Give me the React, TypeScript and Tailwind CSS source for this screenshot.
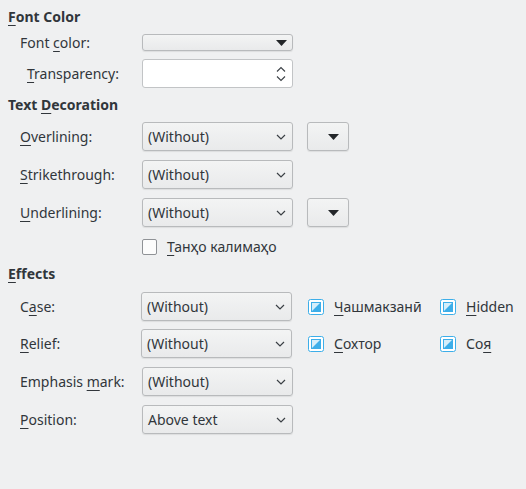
import { FC, ReactNode } from "react";

const U: FC<{ children: ReactNode }> = ({ children }) => (
	<span className="underline underline-offset-[3px] decoration-1">{children}</span>
);

const Chevron = () => (
	<svg width="10" height="6" viewBox="0 0 10 6" className="shrink-0">
		<path d="M1 1 L5 5 L9 1" fill="none" stroke="#3b4045" strokeWidth="1.2" />
	</svg>
);

const Triangle = () => (
	<svg width="11" height="6" viewBox="0 0 11 6">
		<path d="M0 0 H11 L5.5 6 Z" fill="#232629" />
	</svg>
);

const Combo: FC<{ value: string }> = ({ value }) => (
	<div className="w-[151px] h-[29px] flex items-center justify-between pl-[5px] pr-[6px] rounded-[3px] border border-[#b8babc] bg-gradient-to-b from-[#f3f4f4] to-[#e9eaeb] shadow-[0_1px_1px_rgba(0,0,0,0.08)]">
		<span>{value}</span>
		<Chevron />
	</div>
);

const ColorBtn = () => (
	<div className="ml-[14px] w-[42px] h-[29px] flex items-center justify-center pl-[10px] rounded-[3px] border border-[#b8babc] bg-gradient-to-b from-[#f3f4f4] to-[#e9eaeb] shadow-[0_1px_1px_rgba(0,0,0,0.08)]">
		<Triangle />
	</div>
);

const TriCheck = () => (
	<svg width="16" height="16" viewBox="0 0 16 16" className="shrink-0">
		<rect x="0.5" y="0.5" width="15" height="15" rx="2" fill="#ffffff" stroke="#3daee9" />
		<rect x="3.5" y="3.5" width="9" height="9" fill="#d6eefa" stroke="#3daee9" />
		<path d="M12 4 L12 12 L4 12 Z" fill="#3daee9" />
	</svg>
);

const Row: FC<{ label: ReactNode; className?: string; children: ReactNode }> = ({ label, className, children }) => (
	<div className={`flex items-center ${className ?? ""}`}>
		<div className="w-[134px] pl-[12px]">{label}</div>
		{children}
	</div>
);

const Effect: FC<{ label: ReactNode; w: string }> = ({ label, w }) => (
	<div className={`flex items-center gap-[10px] ${w}`}>
		<TriCheck />
		<span>{label}</span>
	</div>
);

export default function App() {
	return (
		<div
			className="w-[526px] h-[489px] bg-[#eff0f1] text-[#31363b] text-[14px] pl-[8px] pt-[7px] flex flex-col"
			style={{ fontFamily: '"Noto Sans", "Open Sans", sans-serif' }}
		>
			<div className="h-[20px] leading-[20px] font-bold">
				<U>F</U>ont Color
			</div>
			<Row className="mt-[7px] h-[17px]" label={<>Font <U>c</U>olor:</>}>
				<div className="w-[151px] h-[17px] flex items-center justify-end pr-[5px] rounded-[3px] border border-[#b8babc] bg-gradient-to-b from-[#f3f4f4] to-[#e9eaeb] shadow-[0_1px_1px_rgba(0,0,0,0.08)]">
					<Triangle />
				</div>
			</Row>
			<div className="mt-[8px] h-[29px] flex items-center">
				<div className="w-[134px] pl-[19px]">
					<U>T</U>ransparency:
				</div>
				<div className="w-[151px] h-[29px] flex items-center justify-end pr-[6px] rounded-[3px] border border-[#c2c4c6] bg-white">
					<svg width="10" height="16" viewBox="0 0 10 16">
						<path d="M1 5.5 L5 1.5 L9 5.5 M1 10.5 L5 14.5 L9 10.5" fill="none" stroke="#3b4045" strokeWidth="1.1" />
					</svg>
				</div>
			</div>

			<div className="mt-[7px] h-[20px] leading-[20px] font-bold">
				Text <U>D</U>ecoration
			</div>
			<Row className="mt-[7px] h-[29px]" label={<><U>O</U>verlining:</>}>
				<Combo value="(Without)" />
				<ColorBtn />
			</Row>
			<Row className="mt-[9px] h-[29px]" label={<><U>S</U>trikethrough:</>}>
				<Combo value="(Without)" />
			</Row>
			<Row className="mt-[9px] h-[29px]" label={<><U>U</U>nderlining:</>}>
				<Combo value="(Without)" />
				<ColorBtn />
			</Row>
			<div className="mt-[11px] h-[17px] flex items-center pl-[134px] gap-[10px]">
				<div className="w-[15px] h-[16px] rounded-[2px] border border-[#8f9296] bg-[#fcfcfc]" />
				<span>
					<U>Т</U>анҳо калимаҳо
				</span>
			</div>

			<div className="mt-[9px] h-[20px] leading-[20px] font-bold">
				<U>E</U>ffects
			</div>
			<Row className="mt-[8px] h-[29px]" label={<>C<U>a</U>se:</>}>
				<div className="-ml-[1px]">
					<Combo value="(Without)" />
				</div>
				<div className="ml-[16px] flex">
					<Effect w="w-[132px]" label={<><U>Ч</U>ашмакзанӣ</>} />
					<Effect w="" label={<><U>H</U>idden</>} />
				</div>
			</Row>
			<Row className="mt-[8px] h-[29px]" label={<><U>R</U>elief:</>}>
				<div className="-ml-[1px]">
					<Combo value="(Without)" />
				</div>
				<div className="ml-[16px] flex">
					<Effect w="w-[132px]" label={<><U>С</U>охтор</>} />
					<Effect w="" label={<>Со<U>я</U></>} />
				</div>
			</Row>
			<Row className="mt-[9px] h-[29px]" label={<>Emphasis <U>m</U>ark:</>}>
				<Combo value="(Without)" />
			</Row>
			<Row className="mt-[9px] h-[29px]" label={<><U>P</U>osition:</>}>
				<Combo value="Above text" />
			</Row>
		</div>
	);
}
